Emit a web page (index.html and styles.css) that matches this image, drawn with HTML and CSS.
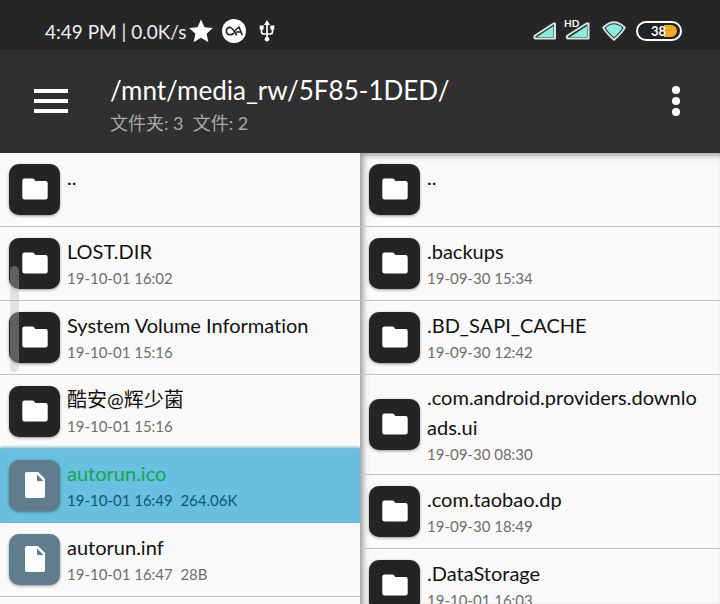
FILE: index.html
```html
<!DOCTYPE html>
<html lang="zh-CN">
<head>
<meta charset="utf-8">
<meta name="viewport" content="width=device-width, initial-scale=1">
<title>/mnt/media_rw/5F85-1DED/</title>
<link rel="stylesheet" href="styles.css">
</head>
<body>
<svg class="defs" aria-hidden="true">
  <symbol id="folder" viewBox="0 0 26 22"><path d="M2.500 .5h8q1 0 1.600.800l1.200 1.700H23.500q2.200 0 2.200 2.200v14q0 2.200-2.200 2.200h-21Q.3 21.400.3 19.200V2.700Q.3.500 2.500 .500z"/></symbol>
  <symbol id="file" viewBox="0 0 20 26"><path d="M2 0H13l7 7v17q0 2-2 2H2q-2 0-2-2V2Q0 0 2 0z"/><path class="fold" d="M12 2.500v6.500h6.500z"/></symbol>
</svg>
<div class="status">
  <span class="clock">4:49 PM | 0.0K/s</span>
  <svg class="star" viewBox="0 0 24 24"><path fill="#fff" d="M12 .5l3.500 7.700 8.300.800-6.200 5.700 1.800 8.500L12 18.800l-7.400 4.400 1.800-8.500L.2 9l8.300-.800z"/></svg>
  <svg class="badge" viewBox="0 0 24 24"><circle cx="12" cy="12" r="12" fill="#fff"/><path d="M11.500 14.500Q9.500 16 7.300 15.700A3.800 3.800 0 0 1 7.300 8.300C10.500 8.300 11.500 11.500 14.500 15.700M12 12.500L17 8l3 7.500M14.500 13h4" fill="none" stroke="#222" stroke-width="1.600" stroke-linejoin="round" stroke-linecap="round"/></svg>
  <svg class="usb" viewBox="0 0 16 22"><path d="M8 3v16M2.500 7v5q0 2 2.500 2h6q2.500 0 2.500-2V7" fill="none" stroke="#fff" stroke-width="1.700"/><path fill="#fff" d="M8 0l3 5H5zM.7 5.500h4v4h-4zM11.300 5.500h4v4h-4z"/><circle cx="8" cy="19.200" r="2.300" fill="#fff"/></svg>
  <span class="space"></span>
  <svg class="signal" viewBox="0 0 24 18"><path class="rim" d="M20.500 1.500h1.500v15H2q-1.500-1.500 0-3z"/><path class="level" d="M20.500 4v11H4z"/></svg>
  <svg class="signal hd" viewBox="0 0 26 22"><path class="rim" d="M22.500 5.500h2v15h-21q-1.500-1.500 0-3z"/><path class="level" d="M23 8v11H6z"/><text x="0" y="9">HD</text></svg>
  <svg class="wifi" viewBox="0 0 24 20"><path class="rim" d="M1.200 6.500Q12-4 22.800 6.500 21 11 12 18.800 3 11 1.200 6.500z"/><path class="level" d="M3.700 7Q12-.500 20.300 7 18 11 12 16.300 6 11 3.700 7z"/></svg>
  <svg class="battery" viewBox="0 0 46 20"><rect x="1" y="1" width="44" height="18" rx="9" fill="#222" stroke="#fff" stroke-width="2"/><path d="M28 4h7a6 6 0 0 1 0 12h-7z" fill="#f9a825"/><text x="15" y="15">38</text></svg>
</div>
<header class="bar">
  <button class="menu" aria-label="菜单"><svg viewBox="0 0 34 24"><path d="M0 2h34M0 12h34M0 22h34" stroke="#fff" stroke-width="4"/></svg></button>
  <div class="heading">
    <h1>/mnt/media_rw/5F85-1DED/</h1>
    <p>文件夹: 3&nbsp; 文件: 2</p>
  </div>
  <button class="more" aria-label="更多"><svg viewBox="0 0 8 30" fill="#fff"><circle cx="4" cy="4" r="4"/><circle cx="4" cy="15" r="4"/><circle cx="4" cy="26" r="4"/></svg></button>
</header>
<main class="panes">
  <section class="pane left">
    <ul>
      <li><a class="row" href="#"><span class="tile"><svg><use href="#folder"/></svg></span><span class="info"><span class="name">..</span><span class="date"></span></span></a></li>
      <li><a class="row" href="#"><span class="tile"><svg><use href="#folder"/></svg></span><span class="info"><span class="name">LOST.DIR</span><span class="date">19-10-01 16:02</span></span></a></li>
      <li><a class="row" href="#"><span class="tile"><svg><use href="#folder"/></svg></span><span class="info"><span class="name">System Volume Information</span><span class="date">19-10-01 15:16</span></span></a></li>
      <li><a class="row" href="#"><span class="tile"><svg><use href="#folder"/></svg></span><span class="info"><span class="name">酷安@辉少菌</span><span class="date">19-10-01 15:16</span></span></a></li>
      <li><a class="row selected" href="#"><span class="tile file"><svg><use href="#file"/></svg></span><span class="info"><span class="name">autorun.ico</span><span class="date">19-10-01 16:49  264.06K</span></span></a></li>
      <li><a class="row" href="#"><span class="tile file"><svg><use href="#file"/></svg></span><span class="info"><span class="name">autorun.inf</span><span class="date">19-10-01 16:47  28B</span></span></a></li>
    </ul>
    <span class="thumb"></span>
  </section>
  <section class="pane right">
    <ul>
      <li><a class="row" href="#"><span class="tile"><svg><use href="#folder"/></svg></span><span class="info"><span class="name">..</span><span class="date"></span></span></a></li>
      <li><a class="row" href="#"><span class="tile"><svg><use href="#folder"/></svg></span><span class="info"><span class="name">.backups</span><span class="date">19-09-30 15:34</span></span></a></li>
      <li><a class="row" href="#"><span class="tile"><svg><use href="#folder"/></svg></span><span class="info"><span class="name">.BD_SAPI_CACHE</span><span class="date">19-09-30 12:42</span></span></a></li>
      <li><a class="row" href="#"><span class="tile"><svg><use href="#folder"/></svg></span><span class="info"><span class="name">.com.android.providers.downloads.ui</span><span class="date">19-09-30 08:30</span></span></a></li>
      <li><a class="row" href="#"><span class="tile"><svg><use href="#folder"/></svg></span><span class="info"><span class="name">.com.taobao.dp</span><span class="date">19-09-30 18:49</span></span></a></li>
      <li><a class="row" href="#"><span class="tile"><svg><use href="#folder"/></svg></span><span class="info"><span class="name">.DataStorage</span><span class="date">19-10-01 16:03</span></span></a></li>
    </ul>
  </section>
</main>
</body>
</html>
```
FILE: styles.css
```css
* { box-sizing: border-box; }
body {
  margin: 0;
  height: 100vh;
  display: flex;
  flex-direction: column;
  overflow: hidden;
  background: #fafafa;
  font-family: Lato, "Noto Sans CJK SC", sans-serif;
  font-variant-ligatures: none;
}
h1, p, ul { margin: 0; padding: 0; font-weight: 400; }
ul { list-style: none; }
svg { display: block; flex: none; }
button { border: 0; padding: 0; background: none; cursor: pointer; }
.defs { position: absolute; width: 0; height: 0; }

.status {
  flex: none;
  display: flex;
  align-items: center;
  height: 50px;
  padding: 12px 38px 0 45px;
  background: #262626;
  color: #eee;
}
.clock { font-size: 19px; margin-right: 3px; }
.star { width: 24px; height: 24px; margin-right: 9px; }
.badge { width: 24px; height: 24px; margin-right: 13px; }
.usb { width: 16px; height: 22px; }
.space { flex: 1; }
.signal { width: 24px; height: 18px; margin-right: 7px; }
.signal.hd { width: 26px; height: 22px; margin: 0 12px 4px 0; }
.wifi { width: 24px; height: 20px; margin-right: 10px; }
.battery { width: 46px; height: 20px; }
.status text { fill: #fff; font-weight: 700; }
.hd text { font-size: 10px; }
.battery text { font-size: 13px; }
.rim { fill: #263633; stroke: #d5e5e2; stroke-width: 2; stroke-linejoin: round; }
.level { fill: #8debdc; }

.bar {
  flex: none;
  display: flex;
  align-items: center;
  height: 103px;
  padding: 0 40px 2px 34px;
  background: #303030;
}
.menu svg { width: 34px; height: 24px; }
.more svg { width: 8px; height: 30px; }
.heading { flex: 1; margin-left: 42px; padding-top: 8px; }
.heading h1 { font-size: 26px; line-height: 36px; color: #fff; }
.heading p { font-size: 18px; line-height: 30px; color: #a8a8a8; }

.panes { flex: 1; min-height: 0; display: grid; grid-template-columns: 1fr 1fr; }
.pane { position: relative; min-width: 0; overflow: hidden; }
.right {
  box-shadow: inset 7px 0 6px -4px #999, inset 0 6px 6px -4px #999;
}
.row {
  display: flex;
  align-items: center;
  gap: 7px;
  min-height: 74px;
  padding: 7px 14px 8px 9px;
  border-bottom: 1px solid #c4c4c4;
  color: #111;
  text-decoration: none;
}
.tile {
  flex: none;
  display: grid;
  place-items: center;
  width: 51px;
  height: 51px;
  border-radius: 10px;
  background: #242424;
  box-shadow: 0 1px 3px #0006;
}
.tile svg { width: 26px; height: 22px; fill: #fff; }
.file { background: #607d8b; }
.file svg { width: 20px; height: 26px; }
.fold { fill: #607d8b; }
.info { flex: 1; min-width: 0; }
.name, .date { display: block; }
.name { font-size: 20px; line-height: 30px; word-break: break-all; }
.date { min-height: 24px; font-size: 15px; line-height: 24px; color: #6e6e6e; white-space: pre; }
.selected {
  background: #68bfdf;
  border-color: #68bfdf;
  box-shadow: 0 -2px 3px #7fb9cc;
}
.selected .name { color: #16a650; }
.selected .date { color: #0c5878; }
.thumb {
  position: absolute;
  left: 10px;
  top: 113px;
  width: 9px;
  height: 106px;
  border-radius: 5px;
  background: #bbb6;
}
```
